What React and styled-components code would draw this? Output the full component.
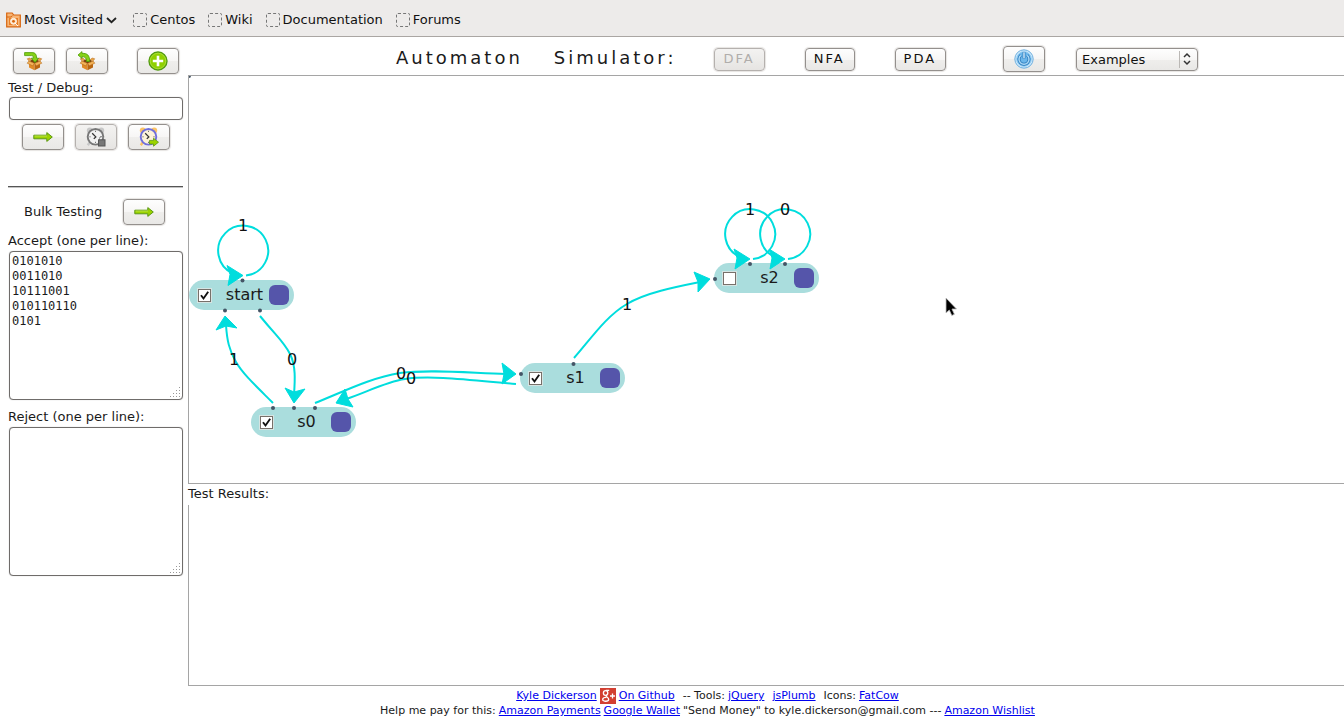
import React from "react";
import styled, { createGlobalStyle, css } from "styled-components";

const Global = createGlobalStyle`
  * { box-sizing: border-box; }
  body {
    margin: 0;
    background: #fff;
    color: #1a1a1a;
    font: 13px/16px "DejaVu Sans", sans-serif;
  }
`;

const Page = styled.div`
  display: flex;
  flex-direction: column;
  min-height: 100vh;
`;

const BookmarkBar = styled.nav`
  display: flex;
  align-items: center;
  gap: 13px;
  height: 37px;
  padding: 4px 6px 0;
  background: #edebea;
  border-bottom: 1px solid #aaa6a3;
`;

const Bookmark = styled.button`
  display: flex;
  align-items: center;
  gap: 3px;
  padding: 0;
  border: 0;
  background: none;
  color: #111;
  font: inherit;
  white-space: nowrap;
  margin-right: ${(p) => (p.$menu ? "3px" : "0")};
  svg { flex: none; }
`;

const Placeholder = styled.span`
  width: 14px;
  height: 14px;
  border: 1px dashed #777;
  border-radius: 2px;
`;

const Columns = styled.div`
  flex: 1;
  display: grid;
  grid-template-columns: 188px minmax(0, 1fr);
`;

const Sidebar = styled.aside`
  display: flex;
  flex-direction: column;
  padding: 11px 5px 0 8px;
`;

const ButtonRow = styled.div`
  display: flex;
  align-items: center;
  gap: 11px;
  padding-left: ${(p) => p.$indent || 0}px;
`;

const Push = styled.span`
  width: 7px;
`;

const buttonFace = css`
  border: 1px solid #94908d;
  border-radius: 4px;
  background: linear-gradient(#fefefe, #f7f6f5 50%, #efeeec 51%, #e9e8e6);
  box-shadow: 0 0 1px 1px #e6e4e2;
  &:disabled {
    border-color: #b5b1ae;
    background: linear-gradient(#f3f2f1, #edecea 50%, #e6e4e2);
    color: #b0adab;
  }
`;

const IconButton = styled.button`
  ${buttonFace}
  display: flex;
  align-items: center;
  justify-content: center;
  width: 42px;
  height: 26px;
  padding: 0;
`;

const ModeButton = styled.button`
  ${buttonFace}
  height: 23px;
  padding: 0 9px 0 8px;
  color: #111;
  font: 13px/16px "DejaVu Sans", sans-serif;
  letter-spacing: 2px;
`;

const Caption = styled.label`
  display: block;
  line-height: 17px;
  margin: ${(p) => p.$top}px 0 ${(p) => p.$bottom}px;
`;

const fieldFace = css`
  display: block;
  width: 174px;
  margin: 0 0 0 1px;
  border: 1px solid #6f6c6a;
  border-radius: 4px;
  background: #fff;
  box-shadow: 0 0 1px #aaa;
  color: #1a1a1a;
`;

const TextField = styled.input`
  ${fieldFace}
  height: 23px;
  margin-bottom: 4px;
`;

const AreaFrame = styled.div`
  position: relative;
  svg { position: absolute; right: 2px; bottom: 2px; pointer-events: none; }
`;

const Area = styled.textarea`
  ${fieldFace}
  height: 149px;
  padding: 2px;
  resize: none;
  font: 12px/15px "DejaVu Sans Mono", monospace;
`;

const Rule = styled.hr`
  width: 175px;
  margin: 36px 0 11px;
  border: 0;
  border-top: 1px solid #555;
  border-bottom: 1px solid #c4c4c4;
`;

const BulkTitle = styled.span`
  width: 88px;
`;

const Main = styled.main`
  display: flex;
  flex-direction: column;
`;

const Header = styled.header`
  display: flex;
  align-items: center;
  height: 38px;
  padding: 6px 0 0 208px;
`;

const Title = styled.h1`
  display: flex;
  gap: 31px;
  margin: 0 38px 2px 0;
  font: 18px/24px "DejaVu Sans", sans-serif;
  letter-spacing: 3px;
`;

const Modes = styled.div`
  display: flex;
  gap: 40px;
  margin-right: 57px;
`;

const SelectFrame = styled.div`
  position: relative;
  width: 122px;
  margin: 1px 0 0 31px;
  svg { position: absolute; right: 0; top: 0; pointer-events: none; }
`;

const Select = styled.select`
  ${buttonFace}
  display: block;
  width: 100%;
  height: 23px;
  padding: 0 5px;
  appearance: none;
  color: #111;
  font: 13px/16px "DejaVu Sans", sans-serif;
`;

const Canvas = styled.section`
  position: relative;
  flex: 1 0 409px;
  border: solid #a5a5a5;
  border-width: 1px 0 1px 1px;
  overflow: hidden;
`;

const Edges = styled.svg`
  position: absolute;
  inset: 0;
  width: 100%;
  height: 100%;
  pointer-events: none;
  text { font: 16px "DejaVu Sans", sans-serif; fill: #111; text-anchor: middle; }
`;

const Node = styled.div`
  position: absolute;
  left: ${(p) => p.$x}px;
  top: ${(p) => p.$y}px;
  display: grid;
  grid-template-columns: 13px 58px 20px;
  align-items: center;
  width: 105px;
  height: 30px;
  padding: 0 5px 0 9px;
  border-radius: 15px;
  background: #aadddd;
`;

const NodeName = styled.label`
  padding-left: 9px;
  text-align: center;
  font-size: 16px;
  line-height: 20px;
`;

const Check = styled.input`
  appearance: none;
  width: 13px;
  height: 13px;
  margin: 0;
  border: 1px solid #77706a;
  background: #fff;
  box-shadow: 0 0 0 1px #d5e4e2;
  &:checked {
    background: #fff url("data:image/svg+xml,%3Csvg xmlns='http://www.w3.org/2000/svg' viewBox='0 0 11 11'%3E%3Cpath d='M2 5.2l2.5 3.3L9.2 1.8' fill='none' stroke='%23111' stroke-width='1.9'/%3E%3C/svg%3E");
  }
`;

const Handle = styled.button`
  width: 20px;
  height: 20px;
  padding: 0;
  border: 0;
  border-radius: 6px;
  background: #5555aa;
`;

const ResultsTitle = styled.h2`
  margin: 0;
  padding: 2px 0 3px;
  font: 13px/16px "DejaVu Sans", sans-serif;
`;

const Results = styled.section`
  flex: 0 0 181px;
  border: solid #a5a5a5;
  border-width: 0 0 1px 1px;
`;

const Footer = styled.footer`
  padding: 2px 0 10px 71px;
  text-align: center;
  font-size: 11px;
  line-height: 15px;
  a { color: #0000ee; }
`;

const FooterLine = styled.div`
  display: flex;
  justify-content: center;
  align-items: center;
  gap: ${(p) => p.$gap}px;
  height: 15px;
  white-space: nowrap;
`;

const Extra = styled.span`
  padding-left: ${(p) => p.$space}px;
`;

const PlusLink = styled.a`
  display: flex;
`;

const FolderIcon = () => (
  <svg width="15" height="16" viewBox="0 0 15 16">
    <path d="M.7 14.8V1h5.5l1.5 2h6.6v11.8z" fill="#f7b576" stroke="#d8640e" strokeWidth="1.2" />
    <path d="M.7 5h4.6l1-1.5" fill="none" stroke="#d8640e" />
    <rect x="3" y="6" width="9" height="7" fill="#e87e26" />
    <circle cx="7.5" cy="9.3" r="3" fill="#fbe2c5" stroke="#fff" strokeWidth=".8" />
    <circle cx="7.5" cy="9.3" r="1.4" fill="#d8640e" />
    <path d="M9 11.2l3 2.8" stroke="#fff" />
  </svg>
);

const ChevronIcon = () => (
  <svg width="11" height="7" viewBox="0 0 11 7">
    <path d="M1 1l4.5 4.2L10 1" fill="none" stroke="#222" strokeWidth="1.8" />
  </svg>
);

const BoxIcon = ({ out }) => (
  <svg width="20" height="20" viewBox="0 0 20 20">
    <path d="M5 10l5.5 2.5v6.8L5 16.6z" fill="#e08b28" />
    <path d="M10.500 12.500L16 10v6.600l-5.500 2.700z" fill="#b96612" />
    <path d="M5 10l5.500-2.200L16 10l-5.500 2.500z" fill="#7b400c" />
    <path d="M5 10l-1.800 2.200 5.400 2.600 1.900-2.300zM16 10l1.800 2.200-5.400 2.600-1.900-2.300z" fill="#f3b45b" stroke="#b36a1a" strokeWidth=".6" />
    <path d="M5 10L3.200 7.800 5.800 7 8 8.800M16 10l1.800-2.200L15.200 7 13 8.800" fill="#e9a245" stroke="#b36a1a" strokeWidth=".5" />
    {out ? (
      <path d="M1 4L5 .6v1.800c5.200-.3 7.700 1.800 7.700 8.100H9.500C9.500 7 8 5.600 5 5.600v1.800z" fill="#86d117" stroke="#4e9a06" strokeWidth=".8" />
    ) : (
      <path d="M.6 1.600H8c3.400 0 4.600 1.800 4.600 5.600h2L11 11.500 7.300 7.200h2C9.300 5.200 9 4.600 7.500 4.600H.6z" fill="#86d117" stroke="#4e9a06" strokeWidth=".8" />
    )}
  </svg>
);

const AddIcon = () => (
  <svg width="20" height="20" viewBox="0 0 20 20">
    <circle cx="10" cy="10" r="9" fill="#8fd000" stroke="#549c12" strokeWidth="1.4" />
    <circle cx="10" cy="10" r="7.8" fill="none" stroke="#b5e34a" strokeWidth=".7" />
    <path d="M10 4.8v10.4M4.8 10h10.4" stroke="#fff" strokeWidth="2.6" />
  </svg>
);

const ArrowIcon = () => (
  <svg width="20" height="12" viewBox="0 0 20 12">
    <path d="M.8 4.200h13V1.600L19.300 6l-5.500 4.400V7.800H.8z" fill="#9bd300" stroke="#5b9714" />
    <path d="M1.500 5h12.500" stroke="#c4e95c" strokeWidth=".8" />
  </svg>
);

const ClockIcon = ({ locked }) => {
  const ring = locked ? "#777" : "#706fdc";
  const bell = locked ? "#c8c8c8" : "#fbc365";
  return (
    <svg width="20" height="20" viewBox="0 0 20 20">
      <circle cx="3.8" cy="3.6" r="3" fill={bell} />
      <circle cx="15.2" cy="3.6" r="3" fill={bell} />
      <path d="M4 15l-2.200 3.200M14 15l2 3" stroke={bell} strokeWidth="2.4" />
      <circle cx="9.500" cy="9.800" r="7.800" fill={locked ? "#f2f2f2" : "#fdf3da"} stroke={ring} strokeWidth="1.9" />
      <path d="M9.500 3.800v1M9.500 14.800v1M3.500 9.800h1M14.500 9.800h1" stroke="#555" />
      <path d="M6.200 6.300l3.600 3.600-2 2" fill="none" stroke="#333" strokeWidth="1.3" />
      {locked ? (
        <g>
          <path d="M13.500 13v-1.500a2 2 0 0 1 4 0V13" fill="none" stroke="#888" />
          <rect x="12.500" y="12.800" width="6.500" height="6.200" fill="#777" stroke="#555" />
        </g>
      ) : (
        <path d="M10.500 13.400h4v-2.200l5 4-5 4V17h-4z" fill="#9bd300" stroke="#5b9714" strokeWidth=".8" />
      )}
    </svg>
  );
};

const PowerIcon = () => (
  <svg width="20" height="20" viewBox="0 0 20 20">
    <circle cx="10" cy="10" r="9.2" fill="#c9e6fa" stroke="#70b0df" />
    <circle cx="10" cy="10" r="7.2" fill="#6bb6ea" stroke="#8cc9f2" />
    <path d="M6.800 6.400a5 5 0 1 0 6.400 0" fill="none" stroke="#2977b8" strokeWidth="3" />
    <path d="M6.800 6.400a5 5 0 1 0 6.400 0" fill="none" stroke="#a9d7f6" strokeWidth="1.500" />
    <path d="M10 3v6.500" stroke="#2977b8" strokeWidth="2.8" />
    <path d="M10 3.200v6" stroke="#d7eefd" strokeWidth="1.4" />
  </svg>
);

const Grip = () => (
  <svg width="11" height="11" viewBox="0 0 11 11" fill="#999">
    {[0, 1, 2, 3].flatMap((row) =>
      Array.from({ length: row + 1 }, (_, i) => (
        <rect key={`${row}-${i}`} x={9 - i * 3} y={row * 3} width="1" height="1" />
      ))
    )}
  </svg>
);

const GooglePlus = () => (
  <svg width="16" height="16" viewBox="0 0 16 16" role="img" aria-label="Google Plus">
    <rect width="16" height="16" fill="#d23f31" />
    <g fill="none" stroke="#fff" strokeWidth="1.3">
      <ellipse cx="5.6" cy="5" rx="2.2" ry="2.4" />
      <path d="M5.8 2.3h3.4M7 7.2c-3 1.200 1.700 1.800 1.700 4 0 2.700-6 2.700-6 .2 0-1.400 1.600-2 3.600-2" />
      <path d="M12.500 5.500v5M10 8h5" />
    </g>
  </svg>
);

const nodes = [
  { id: "start", x: 0, y: 204, accept: true },
  { id: "s0", x: 62, y: 331, accept: true },
  { id: "s1", x: 331, y: 287, accept: true },
  { id: "s2", x: 525, y: 187, accept: false },
];

const loop = (x, y) => ({
  line: `M${x + 4} ${y}A25 25 0 1 0 ${x - 9} ${y - 2}`,
  head: `${x + 1},${y} ${x - 15},${y - 10} ${x - 12},${y - 1} ${x - 14},${y + 10}`,
});

const edges = [
  { ...loop(242, 275.5), text: "1", at: [243, 225] },
  { ...loop(749, 259), text: "1", at: [750, 209] },
  { ...loop(784, 259), text: "0", at: [785, 209] },
  {
    line: "M260 316C278 338 284 342 290 354C296 366 295 380 294 395",
    head: "294,403 285,388 294,392 305,389",
    text: "0",
    at: [292, 359],
  },
  {
    line: "M273 403C255 385 243 374 236 362C229 350 227 340 226 325",
    head: "225,316 216,330 226,326 237,328",
    text: "1",
    at: [234, 359],
  },
  {
    line: "M315 403C345 391 370 378 400 373C430 369 470 373 506 374",
    head: "516,374 502,363 504,374 502,384",
    text: "0",
    at: [401, 373],
  },
  {
    line: "M516 384C470 380 430 375 405 379C385 382 365 393 346 399",
    head: "336,403 345,389 348,399 353,407",
    text: "0",
    at: [411, 378],
  },
  {
    line: "M574 358C590 340 606 316 627 304C645 293 675 287 700 282",
    head: "710,279 694,272 698,282 698,292",
    text: "1",
    at: [627, 304],
  },
];

const endpoints = [
  [189, 76], [242.5, 280.5], [225, 310.5], [260, 310.5], [273, 408], [294, 408],
  [315, 408], [521, 374], [573.5, 364], [715, 279], [750, 264], [785, 264],
];

export default function App() {
  return (
    <Page>
      <Global />
      <BookmarkBar>
        <Bookmark $menu>
          <FolderIcon />
          Most Visited
          <ChevronIcon />
        </Bookmark>
        {["Centos", "Wiki", "Documentation", "Forums"].map((name) => (
          <Bookmark key={name}>
            <Placeholder />
            {name}
          </Bookmark>
        ))}
      </BookmarkBar>

      <Columns>
        <Sidebar>
          <ButtonRow $indent={5}>
            <IconButton aria-label="Load"><BoxIcon /></IconButton>
            <IconButton aria-label="Save"><BoxIcon out /></IconButton>
            <Push />
            <IconButton aria-label="Add state"><AddIcon /></IconButton>
          </ButtonRow>

          <Caption htmlFor="debug" $top={5} $bottom={1}>Test / Debug:</Caption>
          <TextField id="debug" type="text" />
          <ButtonRow $indent={14}>
            <IconButton aria-label="Run test"><ArrowIcon /></IconButton>
            <IconButton aria-label="Stop debugging" disabled><ClockIcon locked /></IconButton>
            <IconButton aria-label="Start debugging"><ClockIcon /></IconButton>
          </ButtonRow>

          <Rule />
          <ButtonRow $indent={16}>
            <BulkTitle>Bulk Testing</BulkTitle>
            <IconButton aria-label="Run bulk tests"><ArrowIcon /></IconButton>
          </ButtonRow>

          <Caption htmlFor="accept" $top={7} $bottom={2}>Accept (one per line):</Caption>
          <AreaFrame>
            <Area id="accept" defaultValue={"0101010\n0011010\n10111001\n010110110\n0101"} />
            <Grip />
          </AreaFrame>
          <Caption htmlFor="reject" $top={8} $bottom={2}>Reject (one per line):</Caption>
          <AreaFrame>
            <Area id="reject" />
            <Grip />
          </AreaFrame>
        </Sidebar>

        <Main>
          <Header>
            <Title>
              <span>Automaton</span>
              <span>Simulator:</span>
            </Title>
            <Modes>
              <ModeButton disabled>DFA</ModeButton>
              <ModeButton>NFA</ModeButton>
              <ModeButton>PDA</ModeButton>
            </Modes>
            <IconButton aria-label="Reset"><PowerIcon /></IconButton>
            <SelectFrame>
              <Select aria-label="Examples">
                <option>Examples</option>
              </Select>
              <svg width="20" height="23" viewBox="0 0 20 23" fill="none">
                <path d="M1.500 3v17" stroke="#bbb8b5" />
                <path d="M6 9l3-3 3 3M6 13l3 3 3-3" stroke="#333" strokeWidth="1.500" />
              </svg>
            </SelectFrame>
          </Header>

          <Canvas>
            {nodes.map((n) => (
              <Node key={n.id} $x={n.x} $y={n.y}>
                <Check type="checkbox" id={n.id} defaultChecked={n.accept} />
                <NodeName htmlFor={n.id}>{n.id}</NodeName>
                <Handle aria-label={`Connect from ${n.id}`} />
              </Node>
            ))}
            <Edges>
              <g transform="translate(-189 -76)">
                {endpoints.map(([x, y]) => (
                  <circle key={`${x}-${y}`} cx={x} cy={y} r="2" fill="#445566" />
                ))}
                {edges.map((e) => (
                  <g key={e.line} stroke="#00dddd">
                    <path d={e.line} fill="none" strokeWidth="2" />
                    <polygon points={e.head} fill="#00dddd" strokeWidth="1" />
                  </g>
                ))}
                {edges.map((e) => (
                  <text key={e.line} x={e.at[0]} y={e.at[1] + 6}>{e.text}</text>
                ))}
                <path
                  d="M946 298v15l3.300-3 2.500 5.500 2.600-1.200-2.400-5.300h4.500z"
                  fill="#000"
                  stroke="#bbb"
                  strokeWidth=".8"
                />
              </g>
            </Edges>
          </Canvas>
          <ResultsTitle>Test Results:</ResultsTitle>
          <Results aria-label="Test results" />
        </Main>
      </Columns>

      <Footer>
        <FooterLine $gap={3}>
          <a href="#author">Kyle Dickerson</a>
          <PlusLink href="#plus"><GooglePlus /></PlusLink>
          <a href="#github">On Github</a>
          <Extra $space={5}>-- Tools:</Extra>
          <a href="#jquery">jQuery</a>
          <Extra $space={2} />
          <a href="#jsplumb">jsPlumb</a>
          <Extra $space={5}>Icons:</Extra>
          <a href="#fatcow">FatCow</a>
        </FooterLine>
        <FooterLine $gap={3}>
          <span>Help me pay for this:</span>
          <a href="#payments">Amazon Payments</a>
          <a href="#wallet">Google Wallet</a>
          <span>"Send Money" to kyle.dickerson@gmail.com ---</span>
          <a href="#wishlist">Amazon Wishlist</a>
        </FooterLine>
      </Footer>
    </Page>
  );
}
